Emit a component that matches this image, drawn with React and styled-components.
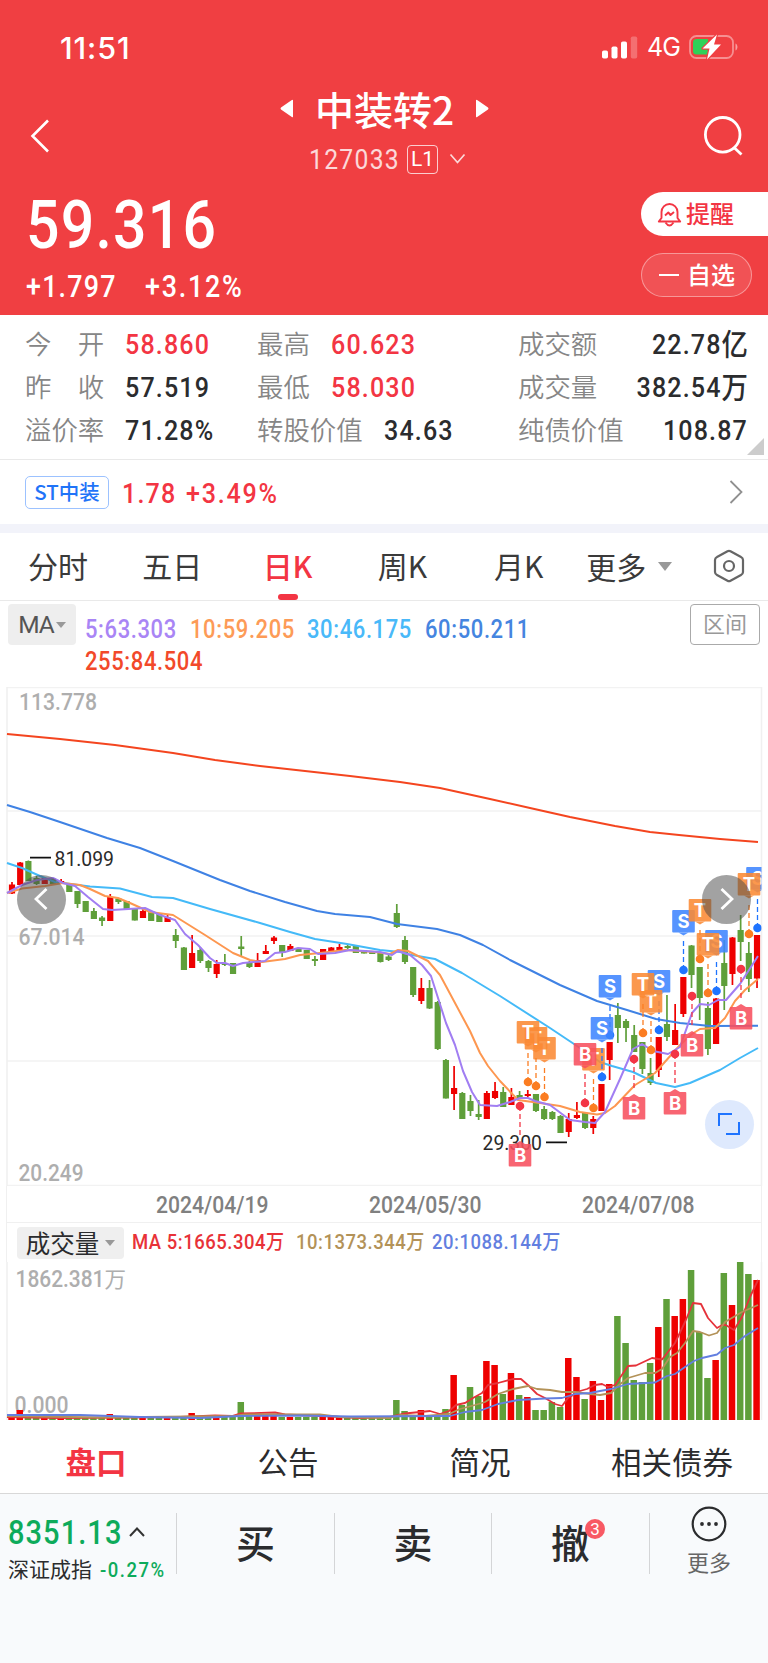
import React from 'react'
import styled, { createGlobalStyle, css } from 'styled-components'

const RED = '#f33543'
const DARK = '#2b2c2e'
const UP = '#ee0000'
const DOWN = '#5f9f3a'

// high, body top, body bottom, low, 1 = up / 0 = down
const candles = [
    [882, 884.5, 893.5, 894, 1], [862, 862.5, 885, 885, 1], [860.5, 861, 881, 881, 0], [876, 878, 884, 885, 0],
    [878, 878, 884, 884, 1], [878, 878, 884, 884, 0], [879, 881, 884, 884, 1], [884, 884, 892, 892, 0],
    [891, 891, 904, 908, 0], [901, 901, 912, 912, 0], [908, 911, 919, 919, 0], [916, 917.5, 921, 926, 0],
    [894, 897, 921, 921, 1], [898, 898.5, 902, 904, 0], [901, 901, 909, 909, 0], [909, 909, 920.5, 920.5, 0],
    [908, 911, 918, 918, 1], [911, 911, 921, 921, 0], [914, 914, 922, 922, 0], [915, 917, 922, 922, 1],
    [929, 935, 941, 948, 0], [947, 947.5, 970, 970, 0], [935, 953, 968, 968, 1], [947, 950, 961, 963, 0],
    [960, 961, 968, 972, 0], [960, 964, 974, 978, 1], [954, 963, 965, 966, 0], [963, 963, 974, 974, 0],
    [936, 946.5, 949, 957, 0], [961, 962.5, 967, 968, 0], [953, 960, 967, 967, 1], [945, 951, 954, 954, 1],
    [936, 937.5, 941, 944, 1], [945, 945, 952, 957, 0], [944, 946, 951, 951, 1], [948, 948, 952, 952, 0],
    [950, 950, 959, 959, 0], [956, 959, 961, 966, 0], [949, 949, 960, 960, 1], [947, 947.5, 952, 952, 1],
    [944, 947, 951, 951, 1], [945, 946, 948, 949, 0], [946, 946, 953, 953, 0], [950, 950, 953.5, 953.5, 0],
    [951, 951, 954, 954, 0], [952, 952, 962, 962.5, 0], [955, 956.5, 960, 961, 0], [904, 913, 927, 928, 0],
    [936, 940, 962, 964, 0], [967, 967, 995, 997, 0], [978, 988, 1001, 1004, 1], [980, 988, 1008.5, 1009, 0],
    [1001, 1002, 1049, 1050, 0], [1059, 1060, 1098.5, 1098.5, 0], [1066, 1088, 1094, 1110, 1], [1092, 1093, 1119, 1119, 0],
    [1095, 1101, 1111, 1116, 0], [1100, 1114, 1117, 1120, 0], [1091, 1093, 1119, 1119, 1], [1082, 1091, 1098, 1099, 1],
    [1087, 1092, 1107, 1107, 0], [1088, 1097, 1105, 1105, 1], [1091, 1095, 1098, 1098, 0], [1090, 1094, 1096, 1097, 1],
    [1094, 1094, 1111, 1112, 0], [1106, 1109, 1119, 1120, 0], [1111, 1112, 1119, 1120, 0], [1115, 1116, 1133, 1133, 0],
    [1113, 1119, 1132, 1137, 1], [1102, 1115, 1118, 1119, 1], [1112, 1113, 1128, 1129, 0], [1116, 1119, 1128, 1134, 1],
    [1084, 1084, 1111, 1111, 1], [1042, 1042, 1060, 1080, 1], [1003, 1015, 1028, 1043, 0], [1019, 1021, 1028, 1042, 0],
    [1025, 1035, 1052, 1052, 0], [1042, 1042, 1069, 1074, 0], [1058, 1073, 1083, 1085, 0], [1037, 1037, 1070, 1077, 1],
    [995, 1024, 1037, 1041, 0], [1004, 1030, 1045, 1045, 1], [977, 977, 1014, 1017, 1], [945, 945.5, 975, 988, 0],
    [967, 967, 998, 1020, 0], [1002, 1008, 1049, 1055, 0], [998, 998.5, 1044, 1044, 1], [940, 963, 986, 1010, 0],
    [937, 937.5, 974, 985, 1], [915, 930, 942, 961, 0], [942, 953, 979, 992, 0], [935, 935, 978.5, 988, 1],
]

const volumes = [
    4, 10, 4, 4, 4, 3, 3, 3, 3, 3, 3, 3, 6, 3, 3, 3, 3, 3, 3, 3, 3, 3, 7, 3, 3, 5, 3, 3, 18, 4, 4, 4, 4, 3, 3, 3,
    3, 3, 3, 3, 3, 2, 2, 2, 2, 2, 2, 20, 9, 5, 10, 5, 5, 11, 45, 15, 33, 24, 59, 55, 26, 47, 25, 23, 10, 10, 18,
    13, 62, 43, 21, 39, 20, 36, 104, 77, 40, 38, 57, 93, 121, 104, 121, 150, 88, 42, 60, 147, 115, 158, 146, 140,
]

const priceLines = [
    { color: '#f4451f', points: '7,734 60,739 115,745 173,753 215,760 260,766 350,776 400,782 440,788 490,799 530,808 570,817 615,826 650,832 679,835 720,839 758,842' },
    { color: '#3f82e4', points: '7,805 30,812 60,822 107,838 140,848 173,861 220,880 250,891 285,902 317,911 335,914 370,917 397,924 437,929 460,935 483,945 510,960 560,985 597,1001 627,1010 656,1019 680,1023 710,1026 758,1025.7' },
    { color: '#44baf8', points: '7,863 22,868 40,876 55,882 90,886.5 120,888.5 152,897 173,898 210,909 260,923 290,932 315,939 347,944 380,950 400,952 412,955 435,959 462,973 500,996 550,1028 580,1048 600,1062 612,1066 633,1072 656,1083 675,1087 690,1083 720,1070 740,1058 758,1048' },
    { color: '#fd9750', points: '7,893 22,888.5 45,886 63,883 80,885 90,889 105,896 118,898 130,903 150,912 173,915 205,935 233,953 250,960 262,962 285,959 300,955 320,953 345,950 375,952 390,954 398,950 408,951 428,961 440,975 470,1031 480,1053 488,1066 500,1081 518,1100 540,1103 560,1106 580,1112 597,1114.5 605,1113 615,1106 635,1085 655,1073 680,1045 692,1034 700,1029 715,1028 725,1018 735,1001 745,990 758,979' },
    { color: '#a17ef2', points: '7,893 22,885 37,880 53,878 63,883 75,886 88,897 103,909 112,910 145,908 160,915 175,920 185,934 198,945 210,958 217,963 225,963 233,966 243,963 265,961 275,953 285,952 298,948 310,949 318,954 335,953 350,950 380,952 392,955 398,951 410,955 422,965 431,976 446,1023 455,1045 463,1071 472,1092 480,1105 497,1106 510,1102 520,1098 528,1098 535,1101 550,1105 570,1120 585,1122 595,1123 605,1112 620,1079 633,1049 642,1044 653,1051 668,1054 680,1047 692,1013 700,1004 709,1005 718,1000 726,1000 740,984 758,956' },
]

const volumeLines = [
    { color: '#e5323a', points: '7,1417 60,1418 180,1417 215,1415.5 232,1416 240,1413.5 275,1412.5 285,1414.5 320,1416 360,1418 390,1417 405,1413.5 430,1411 440,1414 449,1411 456,1405 465,1403 473,1398 482,1393 488,1385 498,1383 513,1379 521,1379 529,1386 537,1394 545,1398 555,1404 562,1406 568,1398 580,1391 587,1389 595,1385 602,1384 608,1387 615,1385 628,1366 636,1365.5 652,1358 662,1359.5 675,1343 685,1322 693,1303 701,1304 708,1318 717,1328 724,1324 734,1330 742,1317 750,1297 758,1280' },
    { color: '#b39258', points: '7,1416 100,1417.5 235,1416 245,1414.5 320,1414.5 340,1417 390,1418 400,1415 425,1416 449,1414 460,1409 475,1405 485,1402 498,1394 513,1389 528,1386 537,1389 550,1390 562,1392 575,1392 590,1394 600,1395 611,1393 619,1385 628,1378 645,1373 655,1373 662,1369 670,1357 677,1353 685,1343 693,1331 700,1332 709,1335.5 717,1333 725,1322 742,1312 758,1305' },
    { color: '#637fe0', points: '7,1415 80,1415 140,1417 200,1418 240,1416 300,1415.5 350,1416.5 450,1416 465,1412 482,1410 498,1404 518,1400 545,1398.5 562,1398 575,1394 590,1393 600,1391 611,1389 628,1384 655,1382.5 667,1376 675,1374 685,1367 694,1361 702,1358 717,1354.5 725,1348 734,1345 745,1336 758,1328' },
]

// trade flags: letter, center x, top of the box, y of the dot
const flags = [
    ['T', 544.5, 1037, 1097], ['T', 536, 1027, 1086], ['T', 528, 1021, 1082],
    ['T', 593.5, 1048, 1108], ['B', 585, 1043, 1103], ['S', 610, 975, 1035], ['S', 602, 1017, 1077],
    ['B', 520, 1144, 1106], ['S', 659, 970, 1030], ['T', 651, 990, 1050], ['T', 643, 973, 1033],
    ['B', 634, 1097, 1059], ['B', 675, 1092, 1054], ['S', 683.5, 910, 970], ['T', 700, 899, 959],
    ['S', 716.5, 930, 991], ['T', 708, 933, 993], ['B', 692, 1034, 996], ['B', 741, 1007, 969],
    ['S', 757.5, 867, 928], ['T', 749, 873, 934],
]
const flagColors = {
    T: ['#fb7d22', '#fb8a35'],
    S: ['#1f74ff', '#3f86ff'],
    B: ['#f33545', '#f8505f'],
}

const candleX = (i) => 12 + i * 8.187

function Flag({ data }) {
    const [letter, x, top, dot] = data
    const [strong, soft] = flagColors[letter]
    const below = top > dot
    const lineEnd = below ? top - 8 : top + 31
    return (
        <g>
            <line x1={x} x2={x} y1={dot} y2={lineEnd} stroke={strong} strokeWidth="1.3" strokeDasharray="5 3" />
            <circle cx={x} cy={dot} r="4.3" fill={strong} />
            <g opacity="0.88">
                <rect x={x - 11.3} y={top} width="22.6" height="22.6" rx="1" fill={soft} />
                <path d={below ? `M${x - 5} ${top}L${x} ${top - 3}L${x + 5} ${top}Z` : `M${x - 5} ${top + 22.6}L${x} ${top + 25.6}L${x + 5} ${top + 22.6}Z`} fill={soft} />
            </g>
            <text x={x} y={top + 18} textAnchor="middle" fontFamily="Inter, sans-serif" fontSize="18.5" fontWeight="700" fill="#fff">{letter}</text>
        </g>
    )
}

function PriceChart() {
    return (
        <ChartSvg viewBox="0 687 768 499" height="499">
            <clipPath id="plot"><rect x="7" y="687" width="754.5" height="499" /></clipPath>
            {[687.5, 811, 936, 1061, 1185.5].map((y) => (
                <line key={y} x1="7" x2="762" y1={y} y2={y} stroke="#f2f2f2" strokeWidth="1.5" />
            ))}
            <path d="M7 687V1186M761.5 687V1186" stroke="#f0f0f0" strokeWidth="1.5" />
            <g fill="#aeaeae" fontSize="23" fontWeight="500">
                <text x="19" y="709.5" textLength="78" lengthAdjust="spacingAndGlyphs">113.778</text>
                <text x="18.5" y="945" textLength="66" lengthAdjust="spacingAndGlyphs">67.014</text>
                <text x="18.5" y="1180.5" textLength="65" lengthAdjust="spacingAndGlyphs">20.249</text>
            </g>
            {candles.map(([high, top, bottom, low, up], i) => (
                <g key={i} fill={up ? UP : DOWN}>
                    <rect x={candleX(i) - 0.85} y={high} width="1.7" height={low - high} />
                    <rect x={candleX(i) - 3.1} y={top} width="6.2" height={bottom - top} />
                </g>
            ))}
            {priceLines.map((line) => (
                <polyline key={line.color} points={line.points} fill="none" stroke={line.color} strokeWidth="2" strokeLinejoin="round" />
            ))}
            <path d="M30 857.7H51M546 1142.3H567" stroke="#111" strokeWidth="1.7" />
            <g fill="#2a2a2a" fontSize="20.5">
                <text x="54.5" y="865.5" textLength="59.5" lengthAdjust="spacingAndGlyphs">81.099</text>
                <text x="482.5" y="1150" textLength="59.5" lengthAdjust="spacingAndGlyphs">29.300</text>
            </g>
            <g clipPath="url(#plot)">
                {flags.map((flag, i) => <Flag key={i} data={flag} />)}
            </g>
        </ChartSvg>
    )
}

function VolumeChart() {
    return (
        <ChartSvg viewBox="0 1262 768 159" height="159">
            <path d="M7 1262V1420M761.5 1262V1420" stroke="#f0f0f0" strokeWidth="1.5" />
            <g fill="#aeaeae" fontSize="23" fontWeight="500">
                <text x="15.5" y="1287" textLength="89" lengthAdjust="spacingAndGlyphs">1862.381</text>
                <text x="104.5" y="1287" fontSize="21.5" fontWeight="400">万</text>
                <text x="14.5" y="1413" textLength="54" lengthAdjust="spacingAndGlyphs">0.000</text>
            </g>
            {volumes.map((v, i) => (
                <rect key={i} x={candleX(i) - 3.7} y={1420 - v} width="6.5" height={v} fill={candles[i][4] ? UP : DOWN} />
            ))}
            {volumeLines.map((line) => (
                <polyline key={line.color} points={line.points} fill="none" stroke={line.color} strokeWidth="1.8" strokeLinejoin="round" />
            ))}
        </ChartSvg>
    )
}

const quotes = [
    ['今　开', '58.860', RED, '最高', '60.623', RED, '成交额', '22.78', '亿'],
    ['昨　收', '57.519', DARK, '最低', '58.030', RED, '成交量', '382.54', '万'],
    ['溢价率', '71.28%', DARK, '转股价值', '34.63', DARK, '纯债价值', '108.87', ''],
]

export default function App() {
    return (
        <Page>
            <GlobalStyle />
            <Header>
                <StatusBar>
                    <Clock>11:51</Clock>
                    <StatusIcons>
                        <svg width="36" height="23" viewBox="0 0 36 23" fill="#fff">
                            <rect x="0" y="14.5" width="6" height="8" rx="1.8" />
                            <rect x="9.5" y="10.5" width="6" height="12" rx="1.8" />
                            <rect x="19" y="5.5" width="6" height="17" rx="1.8" />
                            <rect x="28.8" y="0.5" width="6.4" height="22" rx="1.8" opacity="0.25" />
                        </svg>
                        <Network>4G</Network>
                        <svg width="50" height="26" viewBox="0 0 50 26" fill="none">
                            <rect x="1" y="2" width="43" height="22" rx="6.5" stroke="#fff" strokeOpacity="0.42" strokeWidth="1.8" />
                            <path d="M46.5 9.5c2.6 1.2 2.6 5.800 0 7z" fill="#fff" fillOpacity="0.5" />
                            <path d="M7.500 5H19V20.500H7.500Q4 20.500 4 17V8.500Q4 5 7.500 5Z" fill="#30d158" />
                            <path d="M28 0.500L13.500 14.500H20.500L18 25.500L32 10.500H25Z" fill="#fff" stroke="#f03f42" strokeWidth="2.400" paintOrder="stroke" strokeLinejoin="round" />
                        </svg>
                    </StatusIcons>
                </StatusBar>
                <TitleBar>
                    <svg width="20" height="34" viewBox="0 0 20 34" fill="none" stroke="#fff" strokeWidth="2.600"><path d="M18 1.500L2.500 17L18 32.500" /></svg>
                    <TitleBlock>
                        <TitleRow>
                            <svg width="14" height="19" viewBox="0 0 14 19" fill="#fff"><path d="M13 1.500V17.500Q13 19 11.500 17.800L1 10.500Q0 9.500 1 8.500L11.500 1.200Q13 0 13 1.500Z" /></svg>
                            <Title>中装转2</Title>
                            <svg width="14" height="19" viewBox="0 0 14 19" fill="#fff"><path d="M1 1.500V17.500Q1 19 2.500 17.800L13 10.500Q14 9.500 13 8.500L2.500 1.200Q1 0 1 1.500Z" /></svg>
                        </TitleRow>
                        <CodeRow>
                            <Code>127033</Code>
                            <Level>L1</Level>
                            <svg width="17" height="12" viewBox="0 0 17 12" fill="none" stroke="#fff" strokeOpacity="0.8" strokeWidth="1.700"><path d="M1.500 1.500L8.500 9.500L15.500 1.500" /></svg>
                        </CodeRow>
                    </TitleBlock>
                    <svg width="42" height="42" viewBox="0 0 42 42" fill="none" stroke="#fff" strokeWidth="2.800"><circle cx="20.700" cy="19.800" r="17.300" /><path d="M32 32.500L39.500 39.500" /></svg>
                </TitleBar>
                <PriceBlock>
                    <div>
                        <Price>59.316</Price>
                        <Change><span>+1.797</span><span>+3.12%</span></Change>
                    </div>
                    <HeaderButtons>
                        <AlertButton>
                            <svg width="25" height="25" viewBox="0 0 25 25" fill="none" stroke={RED} strokeWidth="1.900" strokeLinejoin="round">
                                <path d="M4.500 16V10a8 8 0 0 1 16 0V16L23.200 19.500H1.800Z" />
                                <path d="M8.500 20.500Q12.500 26.500 16.500 20.500" /><path d="M8 13.500L11.300 10.500L13.500 13L17 10" />
                            </svg>
                            <span>提醒</span>
                        </AlertButton>
                        <WatchButton><Dash /><span>自选</span></WatchButton>
                    </HeaderButtons>
                </PriceBlock>
            </Header>

            <Quotes>
                {quotes.map((q) => (
                    <QuoteRow key={q[0]}>
                        <Label>{q[0]}</Label>
                        <Value $color={q[2]}>{q[1]}</Value>
                        <Pair>
                            <Label>{q[3]}</Label>
                            <Value $color={q[5]}>{q[4]}</Value>
                        </Pair>
                        <Label>{q[6]}</Label>
                        <Value $color={DARK} $right>{q[7]}<b>{q[8]}</b></Value>
                    </QuoteRow>
                ))}
                <Corner />
            </Quotes>

            <StockRow>
                <StockTag>ST中装</StockTag>
                <Value $color={RED}>1.78</Value>
                <Value $color={RED}>+3.49%</Value>
                <svg width="14" height="24" viewBox="0 0 14 24" fill="none" stroke="#909090" strokeWidth="1.800"><path d="M1.500 1L12.500 12L1.500 23" /></svg>
            </StockRow>

            <Tabs>
                <Tab $w={116}>分时</Tab>
                <Tab $w={113}>五日</Tab>
                <Tab $w={118} $active>日K</Tab>
                <Tab $w={112}>周K</Tab>
                <Tab $w={121}>月K</Tab>
                <MoreTab>更多<Arrow $size={7.5} /></MoreTab>
                <svg width="32" height="34" viewBox="0 0 32 34" fill="none" stroke="#666" strokeWidth="2.200" strokeLinejoin="round">
                    <path d="M14.500 2.200Q16 1.400 17.500 2.200L28 8Q30 9 30 11V23Q30 25 28 26L17.500 31.800Q16 32.600 14.500 31.800L4 26Q2 25 2 23V11Q2 9 4 8Z" /><circle cx="16" cy="17" r="5" />
                </svg>
            </Tabs>

            <MaBar>
                <MaButton>MA<Arrow $size={5} /></MaButton>
                <MaValues>
                    <MaValue $color="#a985f5" $w={105}>5:63.303</MaValue>
                    <MaValue $color="#fd9b57" $w={117}>10:59.205</MaValue>
                    <MaValue $color="#49b9f9" $w={118}>30:46.175</MaValue>
                    <MaValue $color="#4585e0" $w={110}>60:50.211</MaValue>
                    <MaValue $color="#f2492a" $w={130}>255:84.504</MaValue>
                </MaValues>
                <RangeButton>区间</RangeButton>
            </MaBar>

            <ChartArea>
                <PriceChart />
                <NavButton $left={16.5}>
                    <svg width="14" height="24" viewBox="0 0 14 24" fill="none" stroke="#fff" strokeWidth="2.800"><path d="M12.500 2L2 12L12.500 22" /></svg>
                </NavButton>
                <NavButton $left={702}>
                    <svg width="14" height="24" viewBox="0 0 14 24" fill="none" stroke="#fff" strokeWidth="2.800"><path d="M1.500 2L12 12L1.500 22" /></svg>
                </NavButton>
                <ExpandButton>
                    <svg width="22" height="22" viewBox="0 0 22 22" fill="none" stroke="#1f74ff" strokeWidth="2"><path d="M1 13V1H14M21 9V21H8" /></svg>
                </ExpandButton>
            </ChartArea>
            <Dates>
                <span>2024/04/19</span>
                <span>2024/05/30</span>
                <span>2024/07/08</span>
            </Dates>
            <VolumeBar>
                <VolumeButton>成交量<Arrow $size={5} /></VolumeButton>
                <VolumeValue $color="#e83238" $w={164}>MA 5:1665.304<i>万</i></VolumeValue>
                <VolumeValue $color="#b39258" $w={136}>10:1373.344<i>万</i></VolumeValue>
                <VolumeValue $color="#637fe0" $w={134}>20:1088.144<i>万</i></VolumeValue>
            </VolumeBar>
            <VolumeChart />

            <InfoTabs>
                <InfoTab $active>盘口</InfoTab>
                <InfoTab>公告</InfoTab>
                <InfoTab>简况</InfoTab>
                <InfoTab>相关债券</InfoTab>
            </InfoTabs>

            <Footer>
                <IndexBlock>
                    <IndexValue>
                        <span>8351.13</span>
                        <svg width="16" height="10" viewBox="0 0 16 10" fill="none" stroke="#333" strokeWidth="2"><path d="M1 9L8 1.500L15 9" /></svg>
                    </IndexValue>
                    <IndexName>深证成指<span>-0.27%</span></IndexName>
                </IndexBlock>
                <Trade $w={158}>买</Trade>
                <Trade $w={157}>卖</Trade>
                <Trade $w={158}><Cancel>撤<Badge>3</Badge></Cancel></Trade>
                <More>
                    <svg width="36" height="36" viewBox="0 0 36 36" fill="none" stroke="#2b2c2e" strokeWidth="2.200">
                        <circle cx="18" cy="18" r="16.300" />
                        <g fill="#2b2c2e" stroke="none"><circle cx="11" cy="18" r="1.900" /><circle cx="18" cy="18" r="1.900" /><circle cx="25" cy="18" r="1.900" /></g>
                    </svg>
                    更多
                </More>
            </Footer>
        </Page>
    )
}

const GlobalStyle = createGlobalStyle`
  * { box-sizing: border-box; }
  body { margin: 0; background: #fff; }
  svg { display: block; flex: none; }
`

// narrow figures for every quote on the page
const narrow = css`
  transform: scaleX(0.88);
  transform-origin: left;
`

const Page = styled.div`
  width: 768px;
  height: 1663px;
  overflow: hidden;
  font-family: Roboto, "Noto Sans CJK SC", sans-serif;
  color: ${DARK};
`

const Header = styled.header`
  height: 315px;
  background: #f03f42;
  color: #fff;
`
const StatusBar = styled.div`
  height: 82px;
  padding: 12px 29px 0 60px;
  display: flex;
  align-items: center;
  justify-content: space-between;
  font-family: Inter, sans-serif;
`
const Clock = styled.div`
  font-size: 30.5px;
  font-weight: 500;
  letter-spacing: 0.9px;
`
const StatusIcons = styled.div`
  display: flex;
  align-items: center;
`
const Network = styled.div`
  width: 42px;
  margin-left: 9px;
  font-size: 25px;
  letter-spacing: -1px;
`
const TitleBar = styled.div`
  height: 98px;
  padding: 0 24px 0 30px;
  display: flex;
  align-items: center;
  justify-content: space-between;
  & > svg { margin-top: 9px; }
`
const TitleBlock = styled.div`
  padding-left: 23px;
  display: flex;
  flex-direction: column;
  align-items: center;
`
const TitleRow = styled.div`
  display: flex;
  align-items: center;
  gap: 21px;
  height: 56px;
  margin: -4px 6px 4px 0;
`
const Title = styled.div`
  font-family: "Noto Sans CJK SC", sans-serif;
  font-size: 39px;
  font-weight: 500;
  line-height: 56px;
`
const CodeRow = styled.div`
  display: flex;
  align-items: center;
  height: 38px;
`
const Code = styled.div`
  width: 98px;
  font-size: 28px;
  letter-spacing: 1.5px;
  opacity: 0.8;
  ${narrow}
`
const Level = styled.div`
  width: 31px;
  height: 29px;
  margin-right: 11px;
  border: 1.5px solid rgba(255, 255, 255, 0.75);
  border-radius: 4px;
  font-size: 21px;
  line-height: 27px;
  text-align: center;
`
const PriceBlock = styled.div`
  display: flex;
  justify-content: space-between;
  padding: 12px 0 0 26px;
`
const Price = styled.div`
  width: 210px;
  height: 67px;
  font-size: 67px;
  font-weight: 500;
  line-height: 67px;
  letter-spacing: 1.4px;
  ${narrow}
`
const Change = styled.div`
  display: flex;
  margin-top: 10px;
  font-size: 30.5px;
  font-weight: 500;
  line-height: 36px;
  letter-spacing: 1.4px;
  span { width: 119px; white-space: nowrap; ${narrow} }
  span + span { letter-spacing: 2px; }
`
const HeaderButtons = styled.div`
  width: 127px;
  display: flex;
  flex-direction: column;
  gap: 17px;
  font-family: "Noto Sans CJK SC", sans-serif;
  font-size: 24px;
  font-weight: 500;
  span { margin-top: -3px; }
`
const AlertButton = styled.div`
  height: 44px;
  padding-left: 16px;
  display: flex;
  align-items: center;
  gap: 4px;
  border-radius: 22px 0 0 22px;
  background: #fff;
  color: ${RED};
`
const WatchButton = styled.div`
  width: 111px;
  height: 44px;
  padding-left: 17px;
  display: flex;
  align-items: center;
  gap: 8px;
  border: 1.5px solid rgba(255, 255, 255, 0.4);
  border-radius: 22px;
  background: rgba(255, 255, 255, 0.1);
`
const Dash = styled.div`
  width: 20px;
  height: 2px;
  background: #fff;
`

const Quotes = styled.section`
  position: relative;
  height: 145px;
  padding: 6px 21px 0 25px;
  border-bottom: 1.5px solid #e9e9e9;
`
const QuoteRow = styled.div`
  display: grid;
  grid-template-columns: 100px 132px 261px 80px 1fr;
  align-items: center;
  height: 43px;
`
const Pair = styled.div`
  display: flex;
  align-items: center;
  gap: 21px;
`
const Label = styled.div`
  font-family: "Noto Sans CJK SC", sans-serif;
  font-size: 26.4px;
  line-height: 43px;
  font-weight: 350;
  color: #868686;
  white-space: nowrap;
`
const Value = styled.div`
  height: 43px;
  padding-top: 2px;
  font-size: 28.5px;
  font-weight: 500;
  line-height: 43px;
  letter-spacing: 1.3px;
  white-space: nowrap;
  color: ${(p) => p.$color};
  ${narrow}
  ${(p) => p.$right && css`
    display: flex;
    justify-content: flex-end;
    margin-right: -1px;
    transform-origin: right;
  `}
  b { font-weight: 500; font-size: 30px; letter-spacing: 0; }
`
const Corner = styled.div`
  position: absolute;
  right: 4px;
  bottom: 4px;
  border-left: 17px solid transparent;
  border-bottom: 17px solid #ccc;
`

const StockRow = styled.section`
  height: 73px;
  padding: 0 25px;
  display: flex;
  align-items: center;
  border-bottom: 9px solid #f2f3fa;
  ${Value} { width: 64px; padding-top: 1px; }
  ${Value} + ${Value} { letter-spacing: 2px; }
  svg { margin-left: auto; }
`
const StockTag = styled.div`
  width: 84px;
  height: 33px;
  margin-right: 13px;
  border: 1.5px solid #9cc2ff;
  border-radius: 5px;
  color: #1f74f8;
  font-family: "Noto Sans CJK SC", sans-serif;
  font-size: 20.5px;
  font-weight: 500;
  line-height: 29px;
  text-align: center;
`

const Tabs = styled.nav`
  height: 68px;
  padding: 0 23px 0 0;
  display: flex;
  align-items: center;
  border-bottom: 1.5px solid #e9e9e9;
  font-family: "Noto Sans CJK SC", sans-serif;
  font-size: 30px;
  & > svg { margin-top: -2px; }
`
const Tab = styled.div`
  position: relative;
  width: ${(p) => p.$w}px;
  height: 66px;
  line-height: 62px;
  text-align: center;
  color: ${(p) => (p.$active ? RED : '#3a3a3a')};
  font-weight: ${(p) => (p.$active ? 500 : 400)};
  &::after {
    content: '';
    display: ${(p) => (p.$active ? 'block' : 'none')};
    position: absolute;
    left: calc(50% - 10px);
    bottom: 0;
    width: 20px;
    height: 6px;
    border-radius: 3px;
    background: ${RED};
  }
`
const MoreTab = styled.div`
  width: 134px;
  height: 66px;
  padding-left: 7px;
  display: flex;
  align-items: center;
  gap: 12px;
  line-height: 62px;
  padding-bottom: 1px;
  color: #3a3a3a;
`
const Arrow = styled.span`
  border: ${(p) => p.$size}px solid transparent;
  border-top: ${(p) => p.$size * 1.25}px solid #999;
  border-bottom: 0;
`

const MaBar = styled.section`
  height: 86px;
  padding: 3px 8px 0;
  display: flex;
  align-items: flex-start;
`
const MaButton = styled.div`
  width: 68px;
  height: 41px;
  display: flex;
  align-items: center;
  justify-content: center;
  gap: 2px;
  border-radius: 4px;
  background: #eee;
  color: #555;
  font-size: 24.5px;
  letter-spacing: -1px;
`
const MaValues = styled.div`
  flex: 1;
  padding: 10px 60px 0 9px;
  display: flex;
  flex-wrap: wrap;
`
const MaValue = styled.div`
  width: ${(p) => p.$w}px;
  font-size: 25px;
  font-weight: 500;
  line-height: 31.5px;
  letter-spacing: 0.7px;
  color: ${(p) => p.$color};
  ${narrow}
`
const RangeButton = styled.div`
  width: 70px;
  height: 41px;
  border: 1.5px solid #aaa;
  border-radius: 4px;
  color: #999;
  font-family: "Noto Sans CJK SC", sans-serif;
  font-size: 22px;
  line-height: 35px;
  text-align: center;
`

const ChartArea = styled.section`
  position: relative;
`
const ChartSvg = styled.svg`
  width: 768px;
  height: ${(p) => p.height}px;
`
const NavButton = styled.div`
  position: absolute;
  left: ${(p) => p.$left}px;
  top: 187.5px;
  width: 49px;
  height: 49px;
  display: flex;
  align-items: center;
  justify-content: center;
  border-radius: 50%;
  background: rgba(70, 70, 70, 0.5);
`
const ExpandButton = styled(NavButton)`
  left: 704.5px;
  top: 412.5px;
  background: #dee9fd;
`
const Dates = styled.div`
  height: 37px;
  margin: 0 6px 0 6px;
  padding-left: 149px;
  display: flex;
  border: 1.5px solid #f0f0f0;
  border-top: 0;
  color: #808080;
  font-size: 24px;
  font-weight: 500;
  line-height: 38px;
  span { flex: 0 0 213px; ${narrow} }
  span:last-child { flex: none; }
`
const VolumeBar = styled.section`
  height: 39px;
  margin: 0 6px;
  padding-left: 10px;
  display: flex;
  align-items: center;
  border: solid #f0f0f0;
  border-width: 0 1.5px;
`
const VolumeButton = styled.div`
  width: 107px;
  height: 32px;
  margin-right: 8px;
  display: flex;
  align-items: center;
  justify-content: center;
  gap: 6px;
  border-radius: 4px;
  background: #efefef;
  font-family: "Noto Sans CJK SC", sans-serif;
  font-size: 24.5px;
  line-height: 29px;
`
const VolumeValue = styled.div`
  width: ${(p) => p.$w}px;
  font-size: 21px;
  font-weight: 500;
  letter-spacing: 0.6px;
  line-height: 30px;
  margin-top: -1px;
  white-space: nowrap;
  color: ${(p) => p.$color};
  ${narrow}
  i { font-style: normal; font-size: 20.5px; letter-spacing: 0; }
`

const InfoTabs = styled.nav`
  height: 73px;
  display: grid;
  grid-template-columns: repeat(4, 1fr);
  border-bottom: 1.5px solid #d8d8d8;
  font-family: "Noto Sans CJK SC", sans-serif;
  font-size: 30.5px;
  text-align: center;
  line-height: 80px;
`
const InfoTab = styled.div`
  color: ${(p) => (p.$active ? RED : '#2b2c2e')};
  font-weight: ${(p) => (p.$active ? 700 : 400)};
`

const Footer = styled.footer`
  height: 169px;
  padding-top: 19px;
  display: flex;
  align-items: flex-start;
  background: #f8fafc;
`
const IndexBlock = styled.div`
  width: 176px;
  height: 68px;
  padding-left: 8px;
`
const IndexValue = styled.div`
  display: flex;
  align-items: center;
  height: 38px;
  color: #0dab5b;
  font-size: 33px;
  font-weight: 500;
  letter-spacing: 1.2px;
  span { width: 121px; ${narrow} }
`
const IndexName = styled.div`
  display: flex;
  gap: 8px;
  font-size: 21px;
  line-height: 39px;
  white-space: nowrap;
  span { color: #0dab5b; font-weight: 500; letter-spacing: 1.7px; ${narrow} }
`
const Trade = styled.div`
  width: ${(p) => p.$w}px;
  height: 61px;
  border-left: 1.5px solid #d4d5d7;
  font-family: "Noto Sans CJK SC", sans-serif;
  font-size: 39px;
  font-weight: 500;
  line-height: 57px;
  text-align: center;
`
const Cancel = styled.span`
  position: relative;
`
const Badge = styled.span`
  position: absolute;
  right: -15px;
  top: 6px;
  width: 20px;
  height: 20px;
  border-radius: 50%;
  background: #f85964;
  color: #fff;
  font-family: Roboto, sans-serif;
  font-size: 17px;
  font-weight: 400;
  line-height: 20px;
`
const More = styled.div`
  flex: 1;
  height: 61px;
  display: flex;
  flex-direction: column;
  align-items: center;
  border-left: 1.5px solid #d4d5d7;
  font-family: "Noto Sans CJK SC", sans-serif;
  font-size: 22px;
  line-height: 38px;
  color: #666;
  svg { margin-top: -7px; }
`
